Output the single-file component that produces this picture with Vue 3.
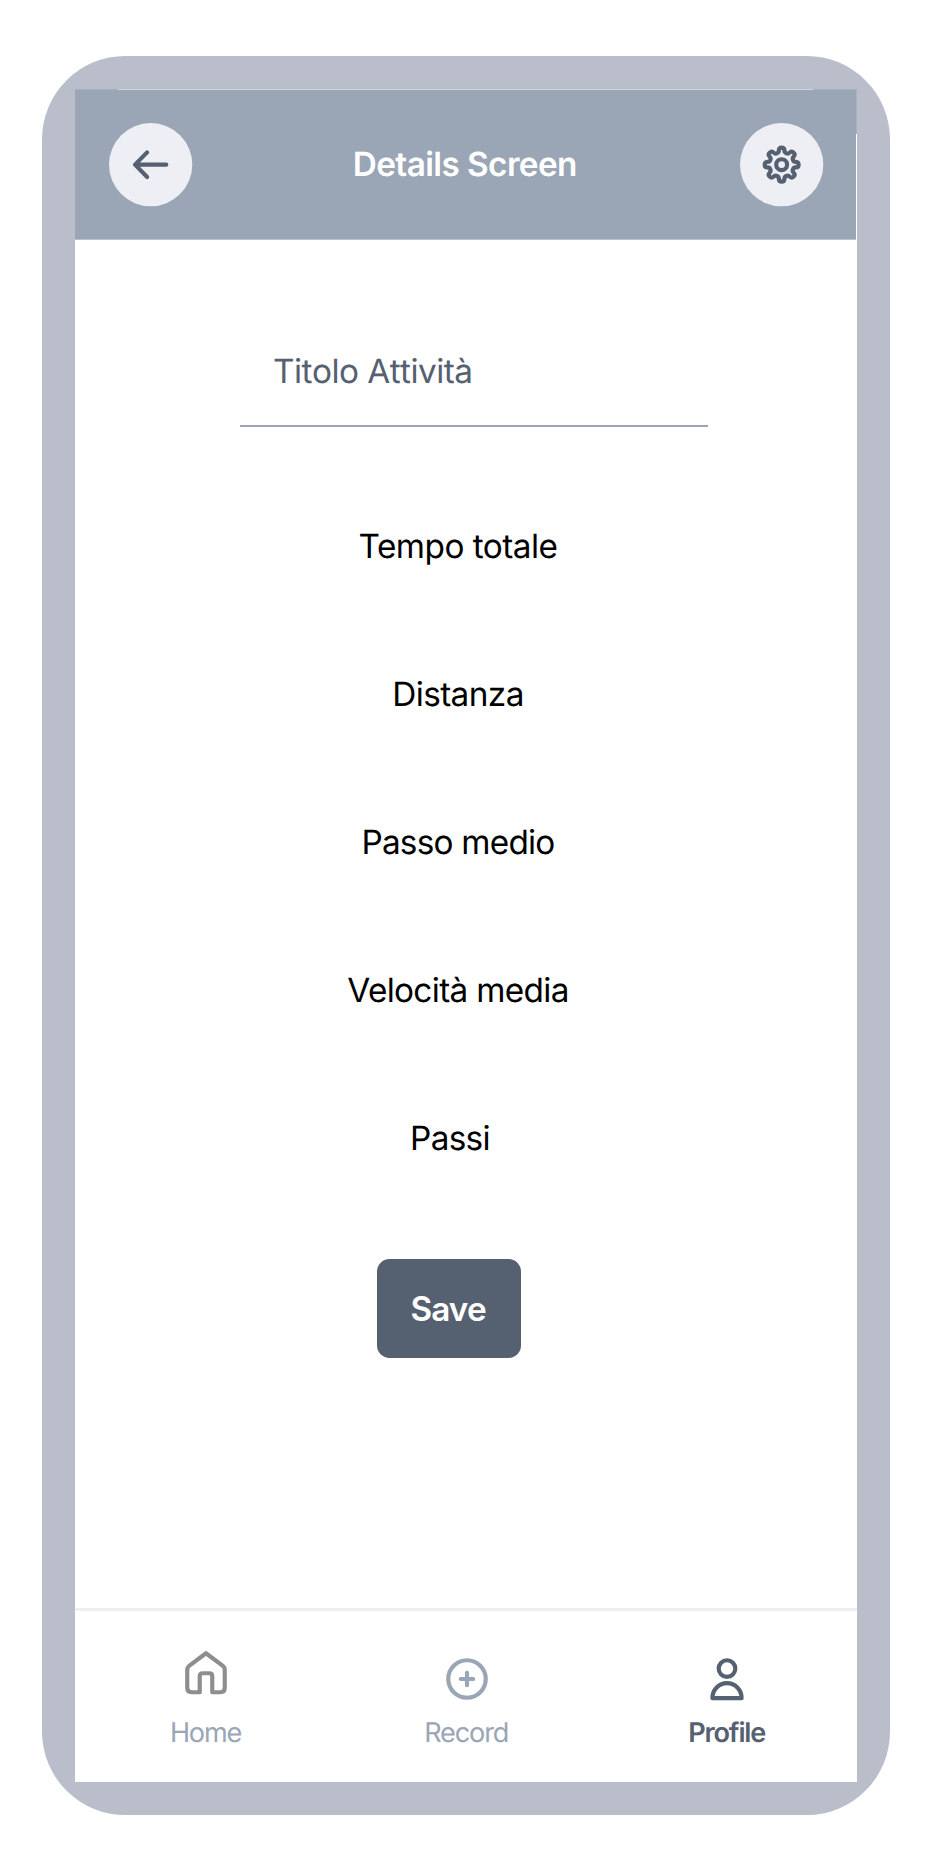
<script setup>
const stats = [
  { label: 'Tempo totale', tracking: -0.53 },
  { label: 'Distanza', tracking: -0.6 },
  { label: 'Passo medio', tracking: -0.77 },
  { label: 'Velocità media', tracking: -0.67 },
  { label: 'Passi', tracking: -0.7, shifted: true },
]

// Gear outline: eight round lobes joined by tangent valleys.
function gearPath() {
  const lobeR = 1.35
  const lobeAt = 7
  const valleyAt = 7.35
  const half = Math.PI / 8
  const dist = Math.hypot(valleyAt * Math.sin(half), lobeAt - valleyAt * Math.cos(half))
  const valleyR = dist - lobeR
  const polar = (r, a) => [12 + r * Math.sin(a), 12 - r * Math.cos(a)]
  const tangent = (lobe, valley) => lobe.map((v, i) => (v + (valley[i] - v) * lobeR / dist).toFixed(3)).join(' ')
  let d = ''
  for (let i = 0; i < 8; i++) {
    const a = (i * Math.PI) / 4
    const lobe = polar(lobeAt, a)
    const before = tangent(lobe, polar(valleyAt, a - half))
    const after = tangent(lobe, polar(valleyAt, a + half))
    d += i === 0 ? `M${before}` : `A${valleyR} ${valleyR} 0 0 0 ${before}`
    d += `A${lobeR} ${lobeR} 0 0 1 ${after}`
  }
  const first = tangent(polar(lobeAt, 0), polar(valleyAt, -half))
  return `${d}A${valleyR} ${valleyR} 0 0 0 ${first}Z`
}
const gear = gearPath()
</script>

<template>
  <div class="page">
    <div class="device">
      <main class="screen">
        <header class="header">
          <button class="round" aria-label="Back">
            <svg class="icon" viewBox="-8 -8 40 40">
              <circle class="disc" cx="12" cy="12" r="20" />
              <path d="M19.5 12H4.5M10.3 6.1L4.5 12l5.8 5.9" />
            </svg>
          </button>
          <h1 class="title">Details Screen</h1>
          <button class="round" aria-label="Settings">
            <svg class="icon" viewBox="-8 -8 40 40">
              <circle class="disc" cx="12" cy="12" r="20" />
              <path :d="gear" />
              <circle cx="12" cy="12" r="2.6" />
            </svg>
          </button>
        </header>

        <section class="content">
          <div class="field">Titolo Attività</div>
          <ul class="stats">
            <li
              v-for="s in stats"
              :key="s.label"
              :class="{ shifted: s.shifted }"
              :style="{ letterSpacing: s.tracking + 'px' }"
            >{{ s.label }}</li>
          </ul>
          <button class="save">Save</button>
        </section>

        <nav class="tabs">
          <a class="tab home">
            <svg class="icon" viewBox="0 0 24 24">
              <path d="M12 3L3.9 9.1Q3 9.8 3 11V19.6Q3 21.7 5.1 21.7H9V14Q9 12.6 10.4 12.6H13.6Q15 12.6 15 14V21.7H18.9Q21 21.7 21 19.6V11Q21 9.8 20.1 9.1Z" />
            </svg>
            <span>Home</span>
          </a>
          <a class="tab record">
            <svg class="icon" viewBox="0 0 24 24"><circle cx="12" cy="12" r="9" /><path d="M12 9v6M9 12h6" /></svg>
            <span>Record</span>
          </a>
          <a class="tab profile">
            <svg class="icon" viewBox="0 0 24 24"><circle cx="12" cy="7" r="4" /><path d="M5 21.2C5 17.2 8.1 14 12 14S19 17.2 19 21.2Z" /></svg>
            <span>Profile</span>
          </a>
        </nav>
      </main>
    </div>
  </div>
</template>

<style>
body {
  margin: 0;
  background: #fff;
}
</style>

<style scoped>
.page {
  box-sizing: border-box;
  height: 1867px;
  padding: 56px 0 0 42px;
  font-family: Inter, "Noto Sans", sans-serif;
  font-size: 33.33px;
  text-rendering: geometricPrecision;
}
.device {
  box-sizing: border-box;
  width: 847.5px;
  height: 1759px;
  padding: 33px;
  border-radius: 83.3px;
  background: #babeca;
}
.screen {
  display: flex;
  flex-direction: column;
  width: 782px;
  height: 1693px;
  background: #fff;
}
.header {
  position: relative;
  box-sizing: border-box;
  display: flex;
  align-items: center;
  justify-content: space-between;
  width: 781px;
  height: 151px;
  padding: 1.3px 33px 0 33.6px;
  border-bottom: 1px solid #b9c1cc;
  background: #9aa5b5;
}
.header::before {
  content: "";
  position: absolute;
  top: 0;
  left: 0;
  box-sizing: border-box;
  width: 781px;
  height: 1px;
  border: solid #a6adbd;
  border-width: 0 43px;
  background: #d0d6df;
}
.header::after {
  content: "";
  position: absolute;
  top: 0;
  right: -1px;
  width: 1px;
  height: 45px;
  background: #aab1c0;
}
button {
  margin: 0;
  border: 0;
  font: inherit;
}
.round {
  width: 83.3px;
  height: 83.3px;
  padding: 0;
  background: none;
  color: #556070;
}
.icon {
  display: block;
  width: 50px;
  height: 50px;
  overflow: visible;
  fill: none;
  stroke: currentColor;
  stroke-width: 2;
  stroke-linecap: round;
  stroke-linejoin: round;
}
.round .icon {
  width: 83.3px;
  height: 83.3px;
}
.disc {
  fill: #eeeff4;
  stroke: none;
}
.title {
  margin: 1px 2px 0 0;
  font-size: 33.33px;
  font-weight: 600;
  letter-spacing: -0.6px;
  color: #fff;
}
.content {
  display: flex;
  flex-direction: column;
  flex: 1;
}
.field {
  box-sizing: border-box;
  width: 468px;
  height: 100px;
  margin: 87px 0 0 165px;
  padding-left: 33px;
  border-bottom: 2px solid #9ba4b6;
  line-height: 90px;
  font-kerning: none;
  letter-spacing: -0.52px;
  color: #556070;
}
.stats {
  width: 766px;
  margin: 46px 0 0;
  padding: 0;
  list-style: none;
  text-align: center;
  color: #000;
}
.stats li {
  height: 148px;
  line-height: 148px;
}
.stats .shifted {
  padding-right: 16px;
}
.save {
  width: 143.5px;
  height: 99px;
  margin: 46px 0 0 302.3px;
  padding: 0 2px 0 0;
  border-radius: 12.5px;
  background: #556070;
  color: #fff;
  font-weight: 600;
  letter-spacing: -0.9px;
}
.tabs {
  box-sizing: border-box;
  display: grid;
  grid-template-columns: repeat(3, 1fr);
  height: 174px;
  border-top: 3px solid #eeeff3;
}
.tab {
  display: flex;
  flex-direction: column;
  align-items: center;
  padding: 43px 0 0 0.4px;
  font-size: 27.08px;
  letter-spacing: -1.15px;
  line-height: 34px;
  color: #9aa5b5;
}
.tab span {
  margin-top: 12px;
}
.record .icon {
  margin-left: 1px;
}
.home .icon {
  margin: -7px 0 7px 1px;
  color: #8e8e8d;
}
.profile {
  padding-left: 0;
  color: #556070;
  font-weight: 600;
}
</style>
